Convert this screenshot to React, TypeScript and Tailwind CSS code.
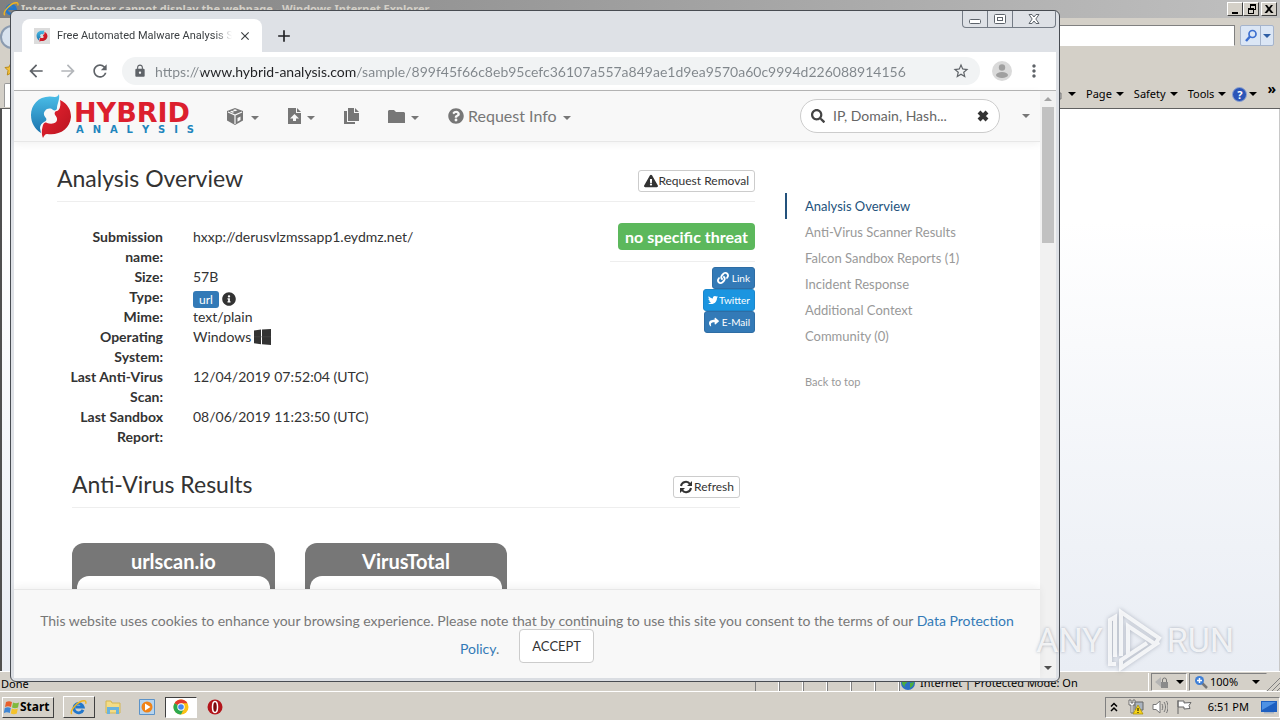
import type { ReactNode } from "react";
import {
  FaExclamationTriangle,
  FaInfoCircle,
  FaLink,
  FaQuestionCircle,
  FaSearch,
  FaShare,
  FaTwitter,
} from "react-icons/fa";
import { MdArrowBack, MdArrowForward, MdClose, MdLock, MdMoreVert, MdRefresh, MdStarBorder, MdAdd } from "react-icons/md";

const SYSTEM = "font-['Noto_Sans','Open_Sans',sans-serif]";

function Caret({ className = "" }: { className?: string }) {
  return (
    <svg viewBox="0 0 8 4" className={"h-1 w-2 shrink-0 " + className} fill="currentColor" aria-hidden="true">
      <path d="M0 0h8L4 4z" />
    </svg>
  );
}

function SwirlMark({ className }: { className: string }) {
  return (
    <svg viewBox="0 0 42 44" className={className} aria-hidden="true">
      <defs>
        <linearGradient id="swirlBlue" x1="0" y1="0" x2="0" y2="1">
          <stop offset="0" stopColor="#4cc0ea" />
          <stop offset="1" stopColor="#1c74ad" />
        </linearGradient>
        <linearGradient id="swirlRed" x1="0" y1="0" x2="1" y2="1">
          <stop offset="0" stopColor="#ee2432" />
          <stop offset="1" stopColor="#b5141f" />
        </linearGradient>
      </defs>
      <path
        fill="url(#swirlBlue)"
        d="M29 0c-1 2-2 3-4 3C10 0 1 10 1 21c0 8 4 14 10 18l-1-5c0-3 2-5 4-6 2-1 3-2 2-4-2-2-3-5-1-7 2-3 6-3 8-1 2 1 4 0 4-2 0-4 3-8 2-14z"
      />
      <path
        fill="url(#swirlRed)"
        d="M30 6c8 4 11 10 11 17-1 12-12 19-24 17-2 0-3 2-4 4-2-5-1-9 0-13 1-2 2-3 4-2 3 1 7 1 9-1s1-5-1-7c-1-2 0-4 2-4 3-1 4-6 3-11z"
      />
    </svg>
  );
}

function Logo() {
  return (
    <a href="#home" aria-label="Hybrid Analysis" className="flex w-[164px] items-center font-['DejaVu_Sans',sans-serif] font-bold">
      <SwirlMark className="h-11 w-[42px] shrink-0" />
      <span className="flex flex-1 flex-col pt-0.5 pl-0.5">
        <span className="text-[27px] leading-6 text-[#dc1f2e]">HYBRID</span>
        <span className="flex justify-between pl-0.5 text-[10px] leading-[9px]">
          {["A", "N", "A", "L", "Y", "S", "I", "S"].map((letter, i) => (
            <span key={i} className="text-[#1f86bd]">
              {letter}
            </span>
          ))}
        </span>
      </span>
    </a>
  );
}

function BoxIcon() {
  return (
    <svg viewBox="0 0 16 17" className="h-[17px] w-4" aria-hidden="true">
      <path d="M8 0l8 3v9.500L8 17l-8-4.500V3z" fill="#777" />
      <path d="M1 4l7 3 7-3M8 7v9" fill="none" stroke="#f8f8f8" strokeWidth="1.200" />
      <path d="M5.500 2.200L8 1.300l2.500.9L8 3.200zM3 3.500l2-.7 2.500 1.200-2 .8zM10.500 10l3-1.500V12l-3 1.700z" fill="#f8f8f8" />
    </svg>
  );
}

function UploadFileIcon() {
  return (
    <svg viewBox="0 0 13 16" className="h-4 w-[13px]" aria-hidden="true">
      <path d="M0 0h8v5h5v11H0z" fill="#777" />
      <path d="M9 0l4 4H9z" fill="#777" />
      <path d="M6.500 6L11 10.500H8V13H5v-2.500H2z" fill="#f8f8f8" />
    </svg>
  );
}

function CopyIcon() {
  return (
    <svg viewBox="0 0 15 16" className="h-4 w-[15px]" fill="#777" aria-hidden="true">
      <path d="M0 3h3v11h8v2H0z" />
      <path d="M4 0h6v5h5v8H4z" />
      <path d="M11 0l4 4h-4z" />
    </svg>
  );
}

function FolderIcon() {
  return (
    <svg viewBox="0 0 17 13" className="h-[13px] w-[17px]" fill="#777" aria-hidden="true">
      <path d="M0 1l1-1h5l2 2h8l1 1v10H0z" />
    </svg>
  );
}

function NavButton({ label, children, caret = true }: { label: string; children: ReactNode; caret?: boolean }) {
  return (
    <button type="button" aria-label={label} className="flex items-center gap-1.5 text-[#777]">
      {children}
      {caret && <Caret className="mt-1" />}
    </button>
  );
}

function WindowsLogo() {
  return (
    <svg viewBox="0 0 17 16" className="inline h-4 w-[17px]" fill="#333" aria-hidden="true">
      <path d="M0 1.500L7 .5v14.700l-7-1zM8 .5L17 0v16l-9-.7z" />
      <path d="M0 7.800h17" stroke="#555" strokeWidth=".5" />
    </svg>
  );
}

function IELogo({ className }: { className: string }) {
  return (
    <svg viewBox="0 0 18 18" className={className} aria-hidden="true">
      <path
        d="M13.800 11.500a5 5 0 1 1 .2-3H6"
        fill="none"
        stroke="#2277cc"
        strokeWidth="3"
      />
      <path d="M2 16C-1 13 9 1 16 2c1 .5 1 2 .5 3" fill="none" stroke="#f2b51d" strokeWidth="1.500" />
    </svg>
  );
}

function ChromeLogo() {
  return (
    <svg viewBox="0 0 16 16" className="h-4 w-4" aria-hidden="true">
      <circle cx="8" cy="8" r="7.500" fill="#fbc116" />
      <path d="M8 8L1.500 4.250A7.500 7.500 0 0 1 14.500 4.250H8z" fill="#e33b2e" />
      <path d="M1.500 4.250A7.500 7.500 0 0 0 8 15.500L11 9.500 8 8z" fill="#2da94f" />
      <circle cx="8" cy="8" r="3.700" fill="#fff" />
      <circle cx="8" cy="8" r="2.800" fill="#4688f1" />
    </svg>
  );
}

function IEWindow() {
  return (
    <section aria-label="Internet Explorer" className={"flex min-h-0 flex-1 flex-col bg-[#d4d0c8] text-[11px] text-black " + SYSTEM}>
      <header className="flex h-[18px] shrink-0 items-center justify-between bg-linear-to-r from-[#808080] to-[#c0c0c0] px-[3px]">
        <h1 className="flex items-center gap-[2px] text-[11px] leading-4 font-bold text-[#d4d0c8]">
          <IELogo className="h-4 w-4" />
          Internet Explorer cannot display the webpage - Windows Internet Explorer
        </h1>
        <div className="flex">
          {[
            { name: "Minimize", d: "M3 9h6v2H3z" },
            { name: "Restore", d: "M5 1h6v6H9v4H3V5h2zM6 3v2h3v1h1V3zM4 7v3h4V7z" },
            { name: "Close", d: "M2 2h2l2 2.500L8 2h2L7.200 6l3.300 4H8L6 7.500 4 10H1.500l3.200-4z" },
          ].map((b) => (
            <button
              key={b.name}
              type="button"
              aria-label={b.name}
              className="flex h-[14px] w-4 items-center justify-center border border-t-white border-r-[#404040] border-b-[#404040] border-l-white bg-[#d4d0c8] last:ml-0.5"
            >
              <svg viewBox="0 0 12 12" className="h-3 w-3" fillRule="evenodd" aria-hidden="true">
                <path d={b.d} />
              </svg>
            </button>
          ))}
        </div>
      </header>

      <div className="flex h-[38px] shrink-0 items-start justify-between pt-[7px] pr-[6px]">
        <button type="button" aria-label="Back" className="h-6 w-6 shrink-0 rounded-full border-2 border-[#8b9bb0] bg-[#d8e2ee]" />
        <input aria-label="Address" className="ml-3 h-[21px] min-w-0 flex-1 border border-t-[#808080] border-r-[#808080] border-b-white border-l-[#808080] bg-white" />
        <div className="ml-[5px] flex h-[21px] rounded-xs border border-[#a5b4cc] bg-[#dbe6f5]">
          <button type="button" aria-label="Search" className="flex w-5 items-center justify-center border-r border-[#a5b4cc]">
            <svg viewBox="0 0 14 14" className="h-3.5 w-3.5" fill="none" stroke="#3c6fd0" aria-hidden="true">
              <circle cx="8.500" cy="5" r="3.500" strokeWidth="1.700" />
              <path d="M6 7.500L2 12" strokeWidth="2.500" />
            </svg>
          </button>
          <button type="button" aria-label="Search options" className="flex w-3 items-center justify-center text-[#2f5fa5]">
            <Caret className="w-1.5" />
          </button>
        </div>
      </div>

      <div className="flex h-[53px] shrink-0 items-end justify-between border-b border-[#606060] pb-[5px]">
        <div className="flex h-full flex-col justify-between">
          <svg viewBox="0 0 14 14" className="mt-1.5 ml-1 h-3.5 w-3.5" fill="#f5c13a" stroke="#b98b1b" aria-hidden="true">
            <path d="M7 1l2 4 4 .5-3 3 .7 4.500L7 11l-3.700 2L4 8.500l-3-3L5 5z" />
          </svg>
          <div className="-mb-1 ml-1 h-6 w-6 rounded-t-xs border border-b-0 border-[#9a9a9a] bg-white" />
        </div>
        <div className="flex items-center gap-[10px] pr-1 leading-[18px]">
          <button type="button" aria-label="Print" className="flex items-center gap-1.5">
            <svg viewBox="0 0 16 14" className="h-3.5 w-4" aria-hidden="true">
              <path d="M3 1h10v5H3z" fill="#fff" stroke="#888" />
              <path d="M1 6h14v6H1z" fill="#bbb" stroke="#777" />
            </svg>
            <Caret className="w-1.5" />
          </button>
          {["Page", "Safety", "Tools"].map((label) => (
            <button key={label} type="button" className="flex items-center gap-1">
              {label}
              <Caret className="w-1.5" />
            </button>
          ))}
          <button type="button" aria-label="Help" className="-ml-1 flex items-center gap-0.5">
            <span className="flex h-[15px] w-[15px] items-center justify-center rounded-full border border-[#8ea3d0] bg-[#2b55b8] leading-none font-bold text-white">?</span>
            <Caret className="w-1.5" />
          </button>
          <button type="button" aria-label="More commands" className="self-start text-sm leading-2 font-bold">»</button>
        </div>
      </div>

      <div className="min-h-0 flex-1 border-r border-l-2 border-r-[#c8c8c8] border-l-[#505050] bg-linear-to-b from-white from-20% to-[#e9edf4]" />

      <footer className="flex h-5 shrink-0 items-center justify-between border-t border-white leading-5">
        <p className="pt-1 pl-px">Done</p>
        <div className="flex h-[18px] items-stretch">
          {[0, 1, 2, 3, 4, 5].map((i) => (
            <span key={i} className="w-6 border-r border-l border-r-white border-l-[#808080]" />
          ))}
          <span className="flex w-[250px] items-center gap-1 border-r border-l border-r-white border-l-[#808080] pt-0.5">
            <svg viewBox="0 0 16 16" className="h-4 w-4 shrink-0" aria-hidden="true">
              <circle cx="8" cy="8" r="7" fill="#2c6fc4" />
              <path d="M3 4c3-3 6-1 5 2s-4 2-3 6C2 10 1 7 3 4zM10 8l4-1c0 3-2 5-4 6z" fill="#4cae3e" />
            </svg>
            Internet | Protected Mode: On
          </span>
          <span className="ml-0.5 flex w-9 items-center justify-center gap-1.5 border border-t-[#808080] border-r-white border-b-white border-l-[#808080]">
            <svg viewBox="0 0 16 16" className="h-4 w-4" aria-hidden="true">
              <path d="M1 8l6-5v10z" fill="#b5b5b5" />
              <path d="M7 8h7v6H7z" fill="#8a8a8a" />
              <path d="M8.500 8V6a2 2 0 0 1 4 0v2" fill="none" stroke="#777" />
            </svg>
            <Caret className="w-1.5" />
          </span>
          <button type="button" className="ml-0.5 flex w-[78px] items-center gap-0.5 border border-t-[#808080] border-r-transparent border-b-white border-l-[#808080] pl-1">
            <svg viewBox="0 0 14 14" className="h-3.5 w-3.5" aria-hidden="true">
              <path d="M8 8l5 5" stroke="#777" strokeWidth="2.500" />
              <circle cx="5.500" cy="5.500" r="4.500" fill="#3f7fd6" />
              <path d="M5.500 3v5M3 5.500h5" stroke="#fff" strokeWidth="1.500" />
            </svg>
            100%
            <Caret className="ml-3 w-1.5" />
          </button>
          <svg viewBox="0 0 13 14" className="mt-1 h-3.5 w-[13px]" stroke="#808080" aria-hidden="true">
            <path d="M0 14L13 1M5 14l8-8M10 14l3-3" />
          </svg>
        </div>
      </footer>
    </section>
  );
}

function Taskbar() {
  return (
    <footer className={"flex h-[29px] shrink-0 items-center justify-between border-t border-white bg-[#d4d0c8] pt-0.5 text-[11px] text-black " + SYSTEM}>
      <nav aria-label="Taskbar" className="flex items-center">
        <button type="button" className="ml-0.5 flex h-[21px] items-center border border-t-white border-r-[#404040] border-b-[#404040] border-l-white pr-[3px] pl-px text-xs font-bold">
          <svg viewBox="0 0 16 16" className="h-4 w-4" aria-hidden="true">
            <path d="M2 3c2-1 4-1 6 0L7 8C5 7 3 7 1 8z" fill="#e8602c" />
            <path d="M9 3.500c2 1 4 1 6 0l-1 5c-2 1-4 1-6 0z" fill="#7fb93c" />
            <path d="M.8 9c2-1 4-1 6 0l-1 5c-2-1-4-1-6 0z" fill="#3f86d4" />
            <path d="M7.800 9.500c2 1 4 1 6 0l-1 5c-2 1-4 1-6 0z" fill="#f4c22b" />
          </svg>
          Start
        </button>
        <button type="button" aria-label="Internet Explorer" className="ml-[9px] flex h-[22px] w-8 items-center justify-center border border-t-white border-r-[#404040] border-b-[#404040] border-l-white">
          <IELogo className="h-[17px] w-[17px]" />
        </button>
        <button type="button" aria-label="File Explorer" className="ml-2.5">
          <svg viewBox="0 0 16 16" className="h-4 w-4" aria-hidden="true">
            <path d="M1 2h5l1 2h8v10H1z" fill="#f3dc86" stroke="#d3b652" />
            <path d="M2 8h12v7h-3v-4H5v4H2z" fill="#69b3dd" />
          </svg>
        </button>
        <button type="button" aria-label="Media Player" className="ml-[18px]">
          <svg viewBox="0 0 16 16" className="h-4 w-4" aria-hidden="true">
            <path d="M.5 .5h15v15H.5z" fill="#b6d4ee" stroke="#5c93c8" />
            <circle cx="8" cy="8" r="5.500" fill="#f08317" />
            <path d="M6 4.500L11.500 8 6 11.500z" fill="#fff" />
          </svg>
        </button>
        <button type="button" aria-label="Chrome" className="ml-2.5 flex h-[21px] w-8 items-center justify-center border border-t-[#404040] border-r-white border-b-white border-l-[#404040] bg-white">
          <ChromeLogo />
        </button>
        <button type="button" aria-label="Opera" className="ml-2.5">
          <svg viewBox="0 0 16 16" className="h-4 w-4" aria-hidden="true">
            <circle cx="8" cy="8" r="7.500" fill="#b3151b" />
            <ellipse cx="8" cy="8" rx="2.500" ry="5.500" fill="#7c0a0e" stroke="#fff" strokeWidth="1.500" />
          </svg>
        </button>
      </nav>
      <div className="flex h-[21px] items-center border border-t-[#808080] border-r-white border-b-white border-l-[#808080] pr-0.5 pl-1">
        <svg viewBox="0 0 8 10" className="h-2.5 w-2" fill="none" stroke="#000" strokeWidth="1.500" aria-hidden="true">
          <path d="M1 4.500l3-3 3 3M1 9l3-3 3 3" />
        </svg>
        <svg viewBox="0 0 16 16" className="ml-2.5 h-4 w-4" aria-hidden="true">
          <path d="M1 1h2v3h2V1h2v5H5v8H3V6H1z" fill="#fff" stroke="#555" strokeWidth=".8" />
          <path d="M7 3h8v8H7z" fill="#aab4c0" stroke="#666" />
          <path d="M10 6l5 9H5z" fill="#f7d417" stroke="#a58a00" strokeWidth=".7" />
          <path d="M10 9v3M10 13v1" stroke="#000" />
        </svg>
        <svg viewBox="0 0 16 16" className="ml-2 h-4 w-4" fill="none" stroke="#777" aria-hidden="true">
          <path d="M1 5.500h3L8 2v12l-4-3.500H1z" fill="#fff" />
          <path d="M10 5c1 2 1 4 0 6M12 3c2 3 2 7 0 10M14.500 2c2 4 2 8 0 12" />
        </svg>
        <svg viewBox="0 0 16 16" className="ml-2 h-4 w-4" fill="#fff" stroke="#666" aria-hidden="true">
          <path d="M2 1v14M2 2h6v2l7-.5-2 3 1 3-6 .5V8H2z" />
        </svg>
        <time className="ml-4">6:51 PM</time>
        <svg viewBox="0 0 16 14" className="ml-3 h-3.5 w-4" aria-hidden="true">
          <path d="M0 1h16v11H0z" fill="#1d5fc0" />
          <path d="M1 2h14L1 10z" fill="#4d91e4" />
          <path d="M3 12h10v1.500H3z" fill="#a8b4c4" />
        </svg>
      </div>
    </footer>
  );
}

function TabStrip() {
  return (
    <div className="flex h-[41px] shrink-0 items-start justify-between">
      <div className="flex h-full items-end pl-2">
        <div className="flex h-[33px] w-60 items-center rounded-t-lg bg-white px-3 font-['Roboto',sans-serif] text-[11px] text-[#3c4043]">
          <span className="flex h-4 w-4 shrink-0 items-center justify-center bg-[#dcdcdc]">
            <SwirlMark className="h-3 w-3" />
          </span>
          <span className="ml-[7px] flex-1 overflow-hidden mask-r-from-90% leading-4 whitespace-nowrap">
            Free Automated Malware Analysis Service
          </span>
          <button type="button" aria-label="Close tab" className="-mr-1 ml-1 p-0.5">
            <MdClose className="h-[14px] w-[14px]" />
          </button>
        </div>
        <button type="button" aria-label="New tab" className="ml-3 flex h-[33px] items-center text-[#202124]">
          <MdAdd className="h-5 w-5" />
        </button>
      </div>
      <div className="flex h-[17px] rounded-b-sm border border-t-0 border-[#747b85] text-[#5d636b]">
        <button type="button" aria-label="Minimize" className="flex w-[25px] items-center justify-center border-r border-[#747b85]">
          <svg viewBox="0 0 12 10" className="h-2.5 w-3" fill="#fff" stroke="currentColor" aria-hidden="true">
            <rect x=".5" y="5.500" width="11" height="4" rx="1" />
          </svg>
        </button>
        <button type="button" aria-label="Maximize" className="flex w-[25px] items-center justify-center border-r border-[#747b85]">
          <svg viewBox="0 0 12 10" className="h-2.5 w-3" fill="#fff" stroke="currentColor" aria-hidden="true">
            <rect x=".5" y=".5" width="11" height="9" rx="1" />
            <rect x="3.500" y="3.500" width="5" height="3" />
          </svg>
        </button>
        <button type="button" aria-label="Close" className="mr-px flex w-[41px] items-center justify-center">
          <svg viewBox="0 0 12 10" className="h-2.5 w-3" fill="#fff" stroke="currentColor" aria-hidden="true">
            <path d="M1 .5h3l2 2.500L8 .5h3L7.800 5l3.200 4.500H8L6 7 4 9.500H1L4.200 5z" />
          </svg>
        </button>
      </div>
    </div>
  );
}

function BrowserToolbar() {
  return (
    <div className="flex h-[39px] shrink-0 items-center border-b border-[#b6b6b6] bg-white pr-3 pl-3 text-[#5f6368]">
      <div className="flex gap-3">
        <button type="button" aria-label="Back"><MdArrowBack className="h-5 w-5" /></button>
        <button type="button" aria-label="Forward"><MdArrowForward className="h-5 w-5 text-[#b4b7bb]" /></button>
        <button type="button" aria-label="Reload"><MdRefresh className="h-5 w-5" /></button>
      </div>
      <div className="ml-3 flex h-7 min-w-0 flex-1 items-center rounded-full bg-[#f1f3f4] pr-2.5 pl-[11px]">
        <MdLock className="h-3.5 w-3.5 shrink-0" />
        <input
          aria-label="Address and search bar"
          defaultValue="https://www.hybrid-analysis.com/sample/899f45f66c8eb95cefc36107a557a849ae1d9ea9570a60c9994d226088914156"
          className="ml-2 h-6 min-w-0 flex-1 bg-linear-[90deg,#80868b_0_46px,#202124_46px_201px,#80868b_201px] bg-clip-text font-['Lato',sans-serif] text-[14px] text-transparent outline-none"
        />
        <button type="button" aria-label="Bookmark"><MdStarBorder className="h-[18px] w-[18px]" /></button>
      </div>
      <button type="button" aria-label="Profile" className="ml-3">
        <svg viewBox="0 0 20 20" className="h-5 w-5" aria-hidden="true">
          <circle cx="10" cy="10" r="10" fill="#dadada" />
          <circle cx="10" cy="6.500" r="3.200" fill="#a0a0a0" />
          <ellipse cx="10" cy="14" rx="6" ry="3" fill="#a0a0a0" />
        </svg>
      </button>
      <button type="button" aria-label="Menu" className="ml-3"><MdMoreVert className="h-5 w-5" /></button>
    </div>
  );
}

function SiteNav() {
  return (
    <nav aria-label="Site" className="flex h-[51px] shrink-0 items-center justify-between border-b border-[#e7e7e7] bg-[#f8f8f8] pr-2.5 pl-4 shadow-[0_2px_8px_rgba(0,0,0,0.06)]">
      <div className="flex items-center">
        <Logo />
        <div className="ml-[33px] flex items-center gap-[29px]">
          <button type="button" aria-label="Sandbox" className="flex items-center gap-2 text-[#777]">
            <BoxIcon />
            <Caret className="mt-1" />
          </button>
          <NavButton label="Submissions"><UploadFileIcon /></NavButton>
          <NavButton label="Reports" caret={false}><CopyIcon /></NavButton>
          <NavButton label="Resources"><FolderIcon /></NavButton>
          <button type="button" className="flex items-center text-base text-[#777]">
            <FaQuestionCircle className="mr-1 h-4 w-4" />
            Request Info
            <Caret className="mt-1 ml-1.5" />
          </button>
        </div>
      </div>
      <div className="flex items-center gap-[22px] text-[#777]">
        <div className="flex h-[34px] w-[200px] items-center rounded-full border border-[#ccc] bg-white px-2.5 text-[#444]">
          <FaSearch className="h-3.5 w-3.5 shrink-0" />
          <input
            aria-label="Search"
            defaultValue="IP, Domain, Hash..."
            className="ml-2 min-w-0 flex-1 text-sm text-[#666] outline-none"
          />
          <button type="button" aria-label="Clear search">
            <svg viewBox="0 0 12 12" className="h-3 w-3" stroke="#333" strokeWidth="4" aria-hidden="true">
              <path d="M2 2l8 8M10 2l-8 8" />
            </svg>
          </button>
        </div>
        <button type="button" aria-label="Account menu"><Caret /></button>
      </div>
    </nav>
  );
}

const DETAILS: { label: string; value: ReactNode }[] = [
  { label: "Submission name:", value: "hxxp://derusvlzmssapp1.eydmz.net/" },
  { label: "Size:", value: "57B" },
  {
    label: "Type:",
    value: (
      <span className="flex h-5 items-center gap-[3px] pt-1">
        <span className="rounded-[3px] bg-[#337ab7] px-1.5 text-xs leading-[17px] text-white">url</span>
        <FaInfoCircle className="h-3.5 w-3.5" />
      </span>
    ),
  },
  { label: "Mime:", value: "text/plain" },
  { label: "Operating System:", value: <span className="flex h-5 items-center gap-[3px]">Windows <WindowsLogo /></span> },
  { label: "Last Anti-Virus Scan:", value: "12/04/2019 07:52:04 (UTC)" },
  { label: "Last Sandbox Report:", value: "08/06/2019 11:23:50 (UTC)" },
];

function Report() {
  return (
    <main className="min-w-0 max-w-[698px] flex-1">
      <div className="flex h-[60px] items-center justify-between border-b border-[#eee] pt-4">
        <h2 className="pb-1 text-[23px] leading-7">Analysis Overview</h2>
        <button type="button" className="mt-0.5 flex h-[22px] items-center rounded-[3px] border border-[#ccc] bg-white px-[5px] text-xs">
          <FaExclamationTriangle className="h-3.5 w-3.5" />
          Request Removal
        </button>
      </div>
      <div className="flex justify-between pt-[21px]">
        <dl className="pt-1">
          {DETAILS.map((d) => (
            <div key={d.label} className="flex gap-[30px]">
              <dt className="w-[106px] pl-2.5 text-right font-bold">{d.label}</dt>
              <dd>{d.value}</dd>
            </div>
          ))}
        </dl>
        <aside className="flex w-[145px] flex-col items-end text-[10px] leading-5 text-white">
          <strong className="rounded-sm bg-[#5cb85c] px-[7px] text-base leading-[27px] whitespace-nowrap">no specific threat</strong>
          <hr className="mt-[11px] mb-[5px] w-full border-[#eee]" />
          <button type="button" className="flex h-[22px] items-center gap-[3px] rounded-[3px] border border-[#2e6da4] bg-[#337ab7] px-1">
            <FaLink className="h-3 w-3" />
            Link
          </button>
          <button type="button" className="flex h-[22px] items-center gap-px rounded-[3px] border border-[#1b87cc] bg-[#1b95e0] px-1">
            <FaTwitter className="h-2.5 w-2.5" />
            Twitter
          </button>
          <button type="button" className="flex h-[22px] items-center gap-[3px] rounded-[3px] border border-[#2e6da4] bg-[#337ab7] px-1">
            <FaShare className="h-2.5 w-2.5" />
            E-Mail
          </button>
        </aside>
      </div>
      <section className="px-[15px] pt-5">
        <div className="flex h-[41px] items-center justify-between border-b border-[#eee] pb-1.5">
          <h2 className="text-[23px] leading-7">Anti-Virus Results</h2>
          <button type="button" className="mt-1.5 flex h-[22px] items-center gap-px rounded-[3px] border border-[#ccc] bg-white px-[5px] text-xs">
            <svg viewBox="0 0 14 14" className="h-3.5 w-3.5" fill="none" stroke="#333" strokeWidth="2" aria-hidden="true">
              <path d="M2 6a5 5 0 0 1 9-2M12 8a5 5 0 0 1-9 2" />
              <path d="M13 1v5H8zM1 13V8h5z" fill="#333" stroke="none" />
            </svg>
            Refresh
          </button>
        </div>
        <div className="mt-[35px] grid grid-cols-3 gap-[30px]">
          {["urlscan.io", "VirusTotal"].map((name) => (
            <article key={name} className="rounded-xl bg-[#777] px-[5px]">
              <h3 className="pt-1.5 pb-0.5 text-center text-xl leading-[25px] font-bold text-white">{name}</h3>
              <div className="h-36 rounded-t-xl bg-white" />
            </article>
          ))}
        </div>
      </section>
    </main>
  );
}

function SectionMenu() {
  return (
    <nav aria-label="Sections" className="w-[200px] shrink-0 pt-[51px] text-[#999]">
      <ul>
        {["Analysis Overview", "Anti-Virus Scanner Results", "Falcon Sandbox Reports (1)", "Incident Response", "Additional Context", "Community (0)"].map(
          (item, i) => (
            <li key={item}>
              <a
                href="#section"
                className={
                  "block border-l-2 pl-[18px] text-[13px] leading-[26px] " +
                  (i === 0 ? "border-[#23527c] text-[#23527c]" : "border-transparent")
                }
              >
                {item}
              </a>
            </li>
          ),
        )}
      </ul>
      <a href="#top" className="mt-5 block pl-5 text-[11px] leading-[26px]">
        Back to top
      </a>
    </nav>
  );
}

function CookieBar() {
  return (
    <section aria-label="Cookie notice" className="relative h-[89px] shrink-0 border-t border-[#e7e7e7] bg-[#f8f8f8] px-5 pt-[17px] text-center leading-7 text-[#777] shadow-[0_-2px_8px_rgba(0,0,0,0.06)]">
      This website uses cookies to enhance your browsing experience. Please note that by continuing to use this site you consent to the terms of our{" "}
      <a href="#policy" className="text-[#337ab7]">
        Data Protection Policy
      </a>
      .
      <button type="button" className="-mt-2 ml-5 h-[34px] rounded-sm border border-[#ccc] bg-white px-3 align-middle text-[13px] leading-5 text-[#333]">
        ACCEPT
      </button>
    </section>
  );
}

function ChromeWindow() {
  return (
    <section
      aria-label="Chrome"
      className="absolute top-[10px] right-[220px] bottom-[38px] left-[10px] flex flex-col overflow-hidden rounded-md border border-[#484c52] bg-[#dee1e6] px-[3px] pb-[3px]"
    >
      <TabStrip />
      <BrowserToolbar />
      <div className="flex min-h-0 flex-1 bg-white font-['Lato',sans-serif] text-sm leading-5 text-[#333]">
        <div className="flex min-w-0 flex-1 flex-col">
          <SiteNav />
          <div className="flex min-h-0 flex-1 gap-[30px] overflow-hidden pl-[43px]">
            <Report />
            <SectionMenu />
          </div>
          <CookieBar />
        </div>
        <div className="flex w-4 flex-col items-center justify-between bg-[#f1f1f1] pt-1.5 pb-2" aria-hidden="true">
          <Caret className="rotate-180 text-[#a3a3a3]" />
          <div className="mt-1.5 mb-auto h-[136px] w-3 bg-[#c1c1c1]" />
          <Caret className="text-[#505050]" />
        </div>
      </div>
    </section>
  );
}

function Watermark() {
  return (
    <div className="pointer-events-none absolute right-[46px] bottom-[46px] flex items-center gap-1 font-['Roboto',sans-serif] text-[34px] leading-[68px] text-white/80 [text-shadow:0_0_3px_rgba(90,100,120,0.5)]">
      <span>ANY</span>
      <svg viewBox="0 0 56 68" className="h-[68px] w-14 drop-shadow-[0_0_2px_rgba(90,100,120,0.5)]" fill="none" stroke="#fff" strokeOpacity=".8" strokeWidth="4" aria-hidden="true">
        <path d="M9 58H3V14l5-3v40M14 50V6l38 26-4 6-27-18v30M52 36L14 62V54l26-17" />
      </svg>
      <span>RUN</span>
    </div>
  );
}

export default function App() {
  return (
    <div className="relative flex h-screen flex-col overflow-hidden">
      <IEWindow />
      <Taskbar />
      <ChromeWindow />
      <Watermark />
    </div>
  );
}
